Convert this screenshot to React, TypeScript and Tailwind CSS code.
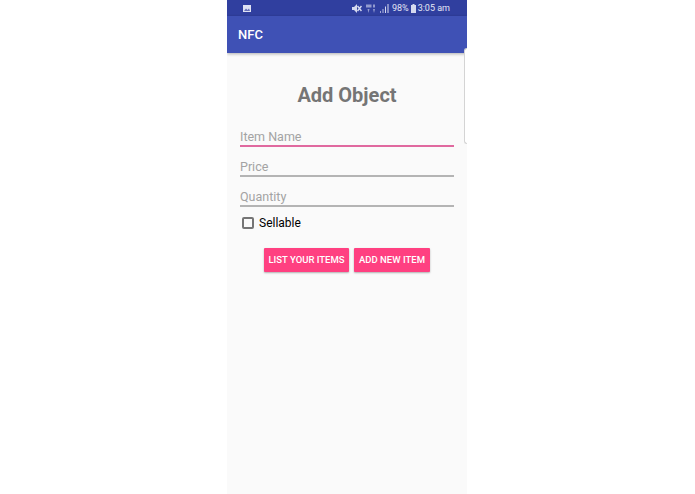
const font = { fontFamily: 'Roboto, "Liberation Sans", sans-serif' };

function Field({ label, active }: { label: string; active?: boolean }) {
  return (
    <div className="flex flex-col">
      <span className="h-[20px] text-[12.5px] leading-[24px] text-[#a3a3a3]">{label}</span>
      <div className={active ? "h-[2px] bg-[#e0699f]" : "h-[2px] bg-[#b4b4b4]"} />
    </div>
  );
}

function StatusIcons() {
  return (
    <div className="flex items-center text-[#d5d9ef]">
      {/* muted speaker */}
      <svg width="10" height="9" viewBox="0 0 10 9" fill="currentColor">
        <path d="M0 3h2l3-3v9L2 6H0z" />
        <path d="M5.5 2l4 5M9.5 2l-4 5" stroke="currentColor" strokeWidth="1.5" />
      </svg>
      {/* 4G data */}
      <svg width="10" height="9" viewBox="0 0 10 9" fill="currentColor" opacity="0.6" className="ml-[4px]">
        <path d="M0 0.5h5.5v3H0zM7 0.5h2v3H7z" />
        <path d="M1.5 5h2L2.5 9zM7 5h2L8 9z" />
      </svg>
      {/* signal */}
      <svg width="9" height="9" viewBox="0 0 9 9" fill="currentColor" className="ml-[4px]">
        <rect x="0" y="7" width="1" height="2" opacity="0.7" />
        <rect x="2.5" y="5" width="1" height="4" opacity="0.8" />
        <rect x="5" y="2.5" width="1" height="6.5" />
        <rect x="7.5" y="0" width="1" height="9" />
      </svg>
      <span className="ml-[3px] text-[9px] leading-[16px] text-[#e4e6f5]">98%</span>
      <svg width="5" height="9" viewBox="0 0 5 9" fill="currentColor" className="ml-[2px]">
        <path d="M1.5 0h2v1H5v8H0V1h1.5z" />
      </svg>
      <span className="ml-[2px] text-[9px] leading-[16px] text-[#e4e6f5]">3:05 am</span>
    </div>
  );
}

export default function App() {
  return (
    <div className="flex h-[494px] w-[695px] bg-white pl-[227px]" style={font}>
      <div className="relative flex h-[494px] w-[240px] flex-col overflow-hidden bg-[#fafafa]">
        <div className="flex h-[16px] items-center justify-between bg-[#303f9f] pl-[16px] pr-[17px]">
          <svg width="8" height="7" viewBox="0 0 8 7">
            <rect width="8" height="7" fill="#dfe2f3" />
            <path d="M1 6l2-2.5 1.5 1.5L6 3.5 7 6z" fill="#303f9f" opacity="0.7" />
          </svg>
          <StatusIcons />
        </div>
        <div className="flex h-[37px] items-center bg-[#3f51b5] pl-[11px] pt-[1px] text-[13px] font-medium text-white shadow-[0_1px_3px_rgba(0,0,0,0.3)]">
          NFC
        </div>

        {/* drawer edge peeking in over the page */}
        <div className="absolute right-0 top-[48px] h-[96px] w-[3px] rounded-l-[4px] border-y border-l border-[#d4d4d4] bg-white" />

        <div className="flex flex-col px-[13px]">
          <h1 className="mt-[29px] text-center text-[20px] font-bold leading-[27px] text-[#757575]">Add Object</h1>
          <div className="mt-[16px] flex flex-col gap-[8px]">
            <Field label="Item Name" active />
            <Field label="Price" />
            <Field label="Quantity" />
          </div>
          <label className="mt-[8px] flex h-[16px] items-center pl-[2px] text-[12px] text-black">
            <span className="h-[12px] w-[12px] shrink-0 rounded-[2px] border-2 border-[#757575]" />
            <span className="ml-[5px]">Sellable</span>
          </label>
          <div className="mt-[17px] flex justify-center gap-[5px]">
            <button className="h-[24px] w-[85px] rounded-[1px] bg-[#ff4081] text-[9.5px] font-medium text-white shadow-[0_1px_2px_rgba(0,0,0,0.3)]">
              LIST YOUR ITEMS
            </button>
            <button className="h-[24px] w-[76px] rounded-[1px] bg-[#ff4081] text-[9.5px] font-medium text-white shadow-[0_1px_2px_rgba(0,0,0,0.3)]">
              ADD NEW ITEM
            </button>
          </div>
        </div>
      </div>
    </div>
  );
}
